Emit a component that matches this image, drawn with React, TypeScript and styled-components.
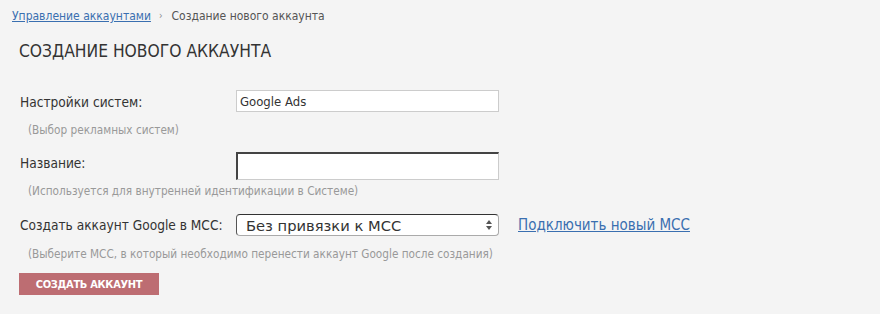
import React from 'react';
import styled, { createGlobalStyle } from 'styled-components';

const GlobalStyle = createGlobalStyle`
  html, body {
    margin: 0;
    padding: 0;
    background: #f4f4f4;
  }
  body {
    font-family: 'DejaVu Sans Condensed', 'DejaVu Sans', sans-serif;
    color: #333;
  }
`;

const Page = styled.div`
  width: 880px;
  height: 314px;
  background: #f4f4f4;
  box-sizing: border-box;
  padding: 8px 12px 0;
`;

const Breadcrumbs = styled.nav`
  display: flex;
  align-items: center;
  font-size: 12px;
  line-height: 16px;
  color: #555;

  a {
    color: #3a6fb0;
    text-decoration: underline;
  }

  .sep {
    margin: 0 9px 0 8px;
    color: #888;
    font-size: 10px;
  }
`;

const Title = styled.h1`
  margin: 17px 0 0 7px;
  font-size: 17.3px;
  line-height: 20px;
  font-weight: normal;
  color: #333;
`;

const Form = styled.form`
  margin: 29px 0 0 8px;
  display: flex;
  flex-direction: column;
`;

const Row = styled.div`
  display: flex;
  align-items: center;
`;

const Label = styled.label<{ $shift?: number }>`
  width: 216px;
  margin-top: ${(p) => (p.$shift ?? 0) * 2}px;
  font-size: 13.6px;
  line-height: 18px;
  color: #333;
`;

const Hint = styled.div<{ $top: number; $bottom: number }>`
  margin: ${(p) => p.$top}px 0 ${(p) => p.$bottom}px 8px;
  font-size: 11.7px;
  line-height: 14px;
  color: #999;
`;

const TextInput = styled.input<{ $readonly?: boolean }>`
  box-sizing: border-box;
  width: 263px;
  height: ${(p) => (p.$readonly ? 22 : 28)}px;
  padding: 0 3px;
  font-family: inherit;
  font-size: 13px;
  color: #333;
  background: #fff;
  outline: none;
  border: 1px solid #ccc;
  ${(p) =>
    !p.$readonly &&
    `
    border-width: 2px 1px 1px 2px;
    border-color: #444 #ccc #ccc #444;
  `}
`;

const SelectBox = styled.div`
  position: relative;
  box-sizing: border-box;
  width: 263px;
  height: 22px;
  display: flex;
  align-items: center;
  padding: 0 9px;
  background: #fff;
  border: 1px solid #aaa;
  border-top-color: #333;
  border-left-color: #555;
  border-radius: 4px;
  font-family: 'DejaVu Sans', sans-serif;
  font-size: 14.7px;
  color: #333;
`;

const Arrows = styled.svg`
  position: absolute;
  right: 5px;
  top: 4px;
`;

const SideLink = styled.a`
  margin-left: 19px;
  font-size: 15px;
  color: #3a6fb0;
  text-decoration: underline;
`;

const Submit = styled.button`
  align-self: flex-start;
  width: 140px;
  height: 22px;
  margin-left: -1px;
  padding: 0;
  border: none;
  background: #bd6d72;
  color: #fff;
  font-family: inherit;
  font-size: 11px;
  font-weight: bold;
  letter-spacing: -0.3px;
  text-transform: uppercase;
  cursor: pointer;
`;

export default function App() {
  return (
    <>
      <GlobalStyle />
      <Page>
        <Breadcrumbs>
          <a href="#">Управление аккаунтами</a>
          <span className="sep">›</span>
          <span>Создание нового аккаунта</span>
        </Breadcrumbs>
        <Title>СОЗДАНИЕ НОВОГО АККАУНТА</Title>
        <Form onSubmit={(e) => e.preventDefault()}>
          <Row>
            <Label $shift={1}>Настройки систем:</Label>
            <TextInput $readonly readOnly defaultValue="Google Ads" />
          </Row>
          <Hint $top={11} $bottom={15}>(Выбор рекламных систем)</Hint>
          <Row>
            <Label $shift={-3.5}>Название:</Label>
            <TextInput />
          </Row>
          <Hint $top={4} $bottom={16}>(Используется для внутренней идентификации в Системе)</Hint>
          <Row>
            <Label>Создать аккаунт Google в МСС:</Label>
            <SelectBox>
              Без привязки к МСС
              <Arrows width="8" height="12" viewBox="0 0 8 12">
                <path d="M4 1 L7 5 L1 5 Z" fill="#555" />
                <path d="M4 11 L7 7 L1 7 Z" fill="#555" />
              </Arrows>
            </SelectBox>
            <SideLink href="#">Подключить новый МСС</SideLink>
          </Row>
          <Hint $top={11} $bottom={12}>
            (Выберите МСС, в который необходимо перенести аккаунт Google после создания)
          </Hint>
          <Submit type="submit">Создать аккаунт</Submit>
        </Form>
      </Page>
    </>
  );
}
